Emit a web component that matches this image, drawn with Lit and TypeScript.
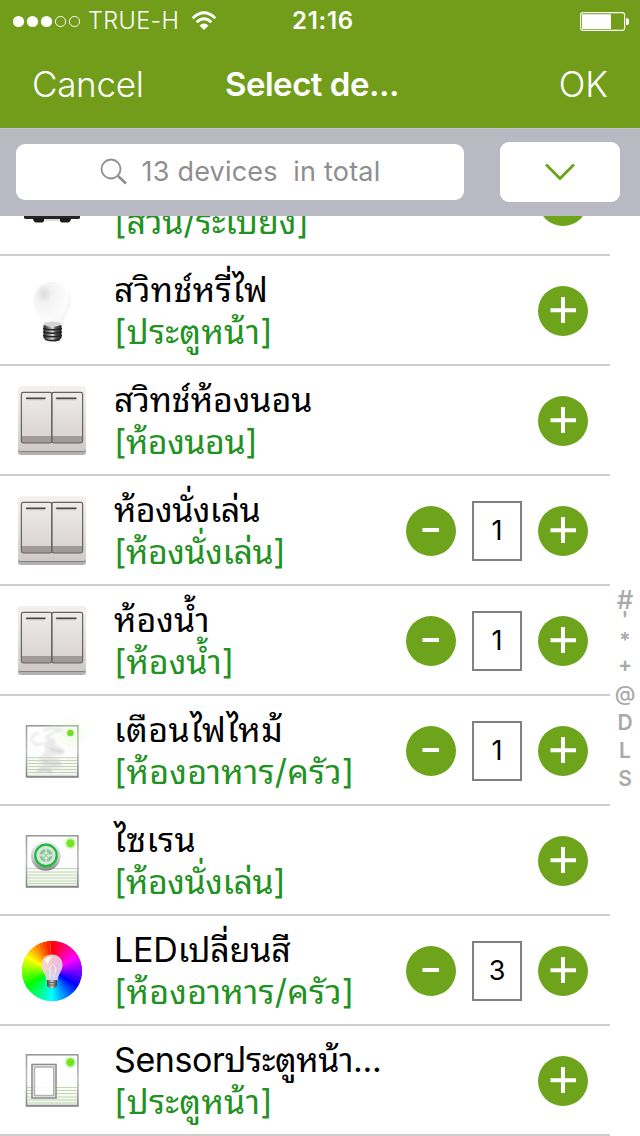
import { LitElement, html, svg, css, nothing } from "lit";
import { customElement, property } from "lit/decorators.js";
import { styleMap } from "lit/directives/style-map.js";

type IconKind = "box" | "bulb" | "switch" | "smoke" | "siren" | "led" | "door";

interface Device {
  icon: IconKind;
  name: string;
  room: string;
  count?: number;
  nameSpacing?: number;
  roomSpacing?: number;
}

const DEVICES: Device[] = [
  { icon: "box", name: "", room: "[สวน/ระเบียง]" },
  { icon: "bulb", name: "สวิทช์หรี่ไฟ", room: "[ประตูหน้า]", nameSpacing: 0.45, roomSpacing: 0.3 },
  { icon: "switch", name: "สวิทช์ห้องนอน", room: "[ห้องนอน]", nameSpacing: -0.1, roomSpacing: -0.5 },
  { icon: "switch", name: "ห้องนั่งเล่น", room: "[ห้องนั่งเล่น]", count: 1, nameSpacing: -0.6, roomSpacing: -0.45 },
  { icon: "switch", name: "ห้องน้ำ", room: "[ห้องน้ำ]", count: 1 },
  { icon: "smoke", name: "เตือนไฟไหม้", room: "[ห้องอาหาร/ครัว]", count: 1, nameSpacing: 0.5, roomSpacing: 0.2 },
  { icon: "siren", name: "ไซเรน", room: "[ห้องนั่งเล่น]", nameSpacing: 0.5, roomSpacing: -0.45 },
  { icon: "led", name: "LEDเปลี่ยนสี", room: "[ห้องอาหาร/ครัว]", count: 3, nameSpacing: -0.15, roomSpacing: 0.2 },
  { icon: "door", name: "Sensorประตูหน้า...", room: "[ประตูหน้า]", nameSpacing: -0.4, roomSpacing: 0.3 },
];

const INDEX = ["#", "'", "*", "+", "@", "D", "L", "S"];

const SECTORS = Array.from({ length: 48 }, (_, i) => {
  const step = (Math.PI * 2) / 48;
  const a = (i - 0.5) * step;
  const b = (i + (i < 47 ? 1.3 : 0.5)) * step;
  const at = (t: number) => `${52 + 30 * Math.sin(t)} ${55 - 30 * Math.cos(t)}`;
  return { d: `M52 55L${at(a)}A30 30 0 0 1 ${at(b)}Z`, fill: `hsl(${(360 - i * 7.5) % 360} 100% 50%)` };
});

/** Housing shared by the wireless sensors: framed plate, vent lines and status light. */
const plate = (lines: number[], glow: boolean) => svg`
  <defs>
    <linearGradient id="frame" x1="0" y1="0" x2="0" y2="1">
      <stop offset="0" stop-color="#9b9b9b"/><stop offset=".5" stop-color="#bdbdbd"/><stop offset="1" stop-color="#808080"/>
    </linearGradient>
    <linearGradient id="face" x1="0" y1="0" x2="0" y2="1">
      <stop offset="0" stop-color="#fff"/><stop offset=".6" stop-color="#fdfdfd"/><stop offset="1" stop-color="#f1f3ef"/>
    </linearGradient>
    <radialGradient id="light">
      <stop offset="0" stop-color="#6be41c"/><stop offset=".5" stop-color="#74e62b"/><stop offset=".68" stop-color="#b6f28c" stop-opacity=".6"/><stop offset="1" stop-color="#dfffd0" stop-opacity="0"/>
    </radialGradient>
    <radialGradient id="haze">
      <stop offset="0" stop-color="#cdf5b4" stop-opacity=".45"/><stop offset="1" stop-color="#e8ffe0" stop-opacity="0"/>
    </radialGradient>
  </defs>
  <rect x="26.500" y="29.800" width="51.400" height="51" fill="url(#face)" stroke="url(#frame)" stroke-width="1.600"/>
  <path d="M26 80.600H78.600" stroke="#8a8a8a" stroke-width="1.600"/>
  ${lines.map((y) => svg`<path d=${`M27.5 ${y}H77`} stroke="#bfd8ad" stroke-width="1"/>`)}
  ${glow
    ? svg`<circle cx="70.400" cy="37.300" r="7" fill="url(#light)"/>`
    : svg`<circle cx="70.400" cy="37" r="20" fill="url(#haze)"/><circle cx="70.400" cy="37" r="3.300" fill="#72e01f"/>`}
`;

const ICONS: Record<IconKind, () => unknown> = {
  box: () => svg`
    <path d="M24 66H80V71.500Q80 73 78 73H26Q24 73 24 71.500Z" fill="#262424"/>
    <path d="M33 72H44V74.500Q44 76.400 42 76.400H36Q33 76 33 72ZM60 72H71Q71 76 68 76.400H62Q60 76.400 60 74.500Z" fill="#1c1a1a"/>
    <path d="M44 74H60" stroke="#bbb" stroke-width="1"/>`,
  bulb: () => svg`
    <defs>
      <radialGradient id="glass" cx=".28" cy=".26" r=".75">
        <stop offset="0" stop-color="#dcdcdc"/><stop offset=".28" stop-color="#f3f3f3"/><stop offset=".8" stop-color="#fcfcfc"/><stop offset="1" stop-color="#f4f4f4"/>
      </radialGradient>
      <linearGradient id="cap">
        <stop offset="0" stop-color="#222"/><stop offset=".25" stop-color="#777"/><stop offset=".5" stop-color="#ddd"/><stop offset=".7" stop-color="#555"/><stop offset="1" stop-color="#1d1d1d"/>
      </linearGradient>
    </defs>
    <path d="M52.500 26C62 26 71.500 33.500 71.500 44C71.500 53 64.500 57.500 63.500 69Q53 73 42 69C41 58 33.500 54 33.500 44C33.500 34 42 26 52.500 26Z" fill="url(#glass)"/>
    <path d="M44 67Q52 64 61 67V70H44Z" fill="#d4d4d4"/>
    <path d="M43.500 69Q52.500 72 61.500 69V82Q58 86 52.500 86Q47 86 43.500 82Z" fill="url(#cap)"/>
    <path d="M43 72.500Q52 75 62 72.500M43 76Q52 78.500 62 76M43 79.500Q52 82 62 79.500M45 83.500Q52 85.500 60 83.500" fill="none" stroke="#242424" stroke-width="1.300"/>`,
  switch: () => svg`
    <defs>
      <linearGradient id="base" x1="0" y1="0" x2="0" y2="1">
        <stop offset="0" stop-color="#f4f1ee"/><stop offset=".5" stop-color="#e5e1de"/><stop offset="1" stop-color="#cfcac7"/>
      </linearGradient>
      <linearGradient id="key" x1="0" y1="0" x2="0" y2="1">
        <stop offset="0" stop-color="#eeebe8"/><stop offset="1" stop-color="#d7d2cf"/>
      </linearGradient>
    </defs>
    <rect x="18" y="24" width="68" height="65" rx="3" fill="#b3b1b0"/>
    <rect x="18.500" y="23" width="67" height="63" rx="2.500" fill="#858381"/>
    <rect x="18" y="20" width="68" height="65" rx="2.500" fill="url(#base)"/>
    <rect x="21.400" y="26.400" width="30.400" height="50.400" rx="1.800" fill="url(#key)"/>
    <rect x="51.800" y="26.400" width="30.800" height="50.400" rx="1.800" fill="url(#key)"/>
    <path d="M22 70H82V76H22Z" fill="#a09b98"/>
    <rect x="21.400" y="26.400" width="30.400" height="50.400" rx="1.800" fill="none" stroke="#646461" stroke-width="1.200"/>
    <rect x="51.800" y="26.400" width="30.800" height="50.400" rx="1.800" fill="none" stroke="#646461" stroke-width="1.200"/>
    <path d="M26.500 32.300H45M56.500 32.300H76" stroke="#4b4a49" stroke-width="1.500" stroke-linecap="round"/>
    <path d="M26.500 33.700H45M56.500 33.700H76" stroke="#aaa6a4" stroke-width=".8"/>`,
  smoke: () => svg`
    ${plate([61.700, 64.500, 67.500, 70.500, 73.500, 76.500], false)}
    <defs><filter id="soft"><feGaussianBlur stdDeviation="1"/></filter></defs>
    <g filter="url(#soft)" opacity=".75">
      <path d="M39 37Q31 38 32 45Q35 51 43 47M43 35Q52 29 61 34Q52 36 45 42" fill="none" stroke="#e4e4e4" stroke-width="2.500"/>
      <path d="M49 41Q57 42 56 49Q65 52 64 58Q56 61 50 59Q61 63 62 69Q57 75 51 72Q55 78 47 77L36 77Q38 71 43 70Q36 67 40 61L46 55Q41 50 49 41Z" fill="#d5d2d5" opacity=".6"/>
      <path d="M50 52Q55 56 64 55M43 65Q51 69 60 67M38 75Q44 72 52 76" fill="none" stroke="#bdb8bd" stroke-width="2" opacity=".7"/>
    </g>`,
  siren: () => svg`
    ${plate([62.600, 66, 69, 72, 75, 77.500], true)}
    <defs>
      <linearGradient id="rim" x1="0" y1="0" x2="0" y2="1"><stop offset="0" stop-color="#efefef"/><stop offset=".6" stop-color="#c9c9c9"/><stop offset="1" stop-color="#858585"/></linearGradient>
    </defs>
    <circle cx="45.800" cy="50" r="14.800" fill="url(#rim)"/>
    <circle cx="46" cy="49.400" r="10.700" fill="#dce4dd" stroke="#15bd3a" stroke-width="2.200"/>
    <circle cx="46" cy="49.400" r="5" fill="none" stroke="#83c995" stroke-width="3"/>
    <path d="M46 43V56M39.500 49.400H52.500" stroke="#dce4dd" stroke-width="1.600"/>
    <path d="M43.500 47L48.500 52M48.500 47L43.500 52" stroke="#80c592" stroke-width="1"/>`,
  led: () => svg`
    ${SECTORS.map((s) => svg`<path d=${s.d} fill=${s.fill}/>`)}
    <defs>
      <linearGradient id="lamp" x1="0" y1="0" x2="1" y2="1"><stop offset="0" stop-color="#f6ded8"/><stop offset=".5" stop-color="#eccde0"/><stop offset="1" stop-color="#d9dff2"/></linearGradient>
      <linearGradient id="screw"><stop offset="0" stop-color="#444"/><stop offset=".5" stop-color="#ccc"/><stop offset="1" stop-color="#333"/></linearGradient>
    </defs>
    <path d="M52 38.500C58.500 38.500 62.500 43 62.500 49C62.500 55 58 58 57.500 65H46.500C46 58 41.500 55 41.500 49C41.500 43 45.500 38.500 52 38.500Z" fill="url(#lamp)" opacity=".93"/>
    <path d="M45 44Q48 40 53 41Q49 43 48 49Z" fill="#fff" opacity=".8"/>
    <path d="M50 61V51L53 48L56 52L54 61" fill="none" stroke="#f4eff5" stroke-width="1"/>
    <path d="M47 64H57V70L54.500 72H49.500L47 70Z" fill="url(#screw)"/>
    <path d="M47 66.500H57M47 69H57" stroke="#555" stroke-width=".7"/>`,
  door: () => svg`
    <g transform="translate(0 -1)">
      ${plate([62.500, 65.500, 68.500, 72, 75, 78], true)}
      <rect x="32" y="39.500" width="24" height="33.500" fill="#fff" fill-opacity=".75" stroke="#8d8d8d" stroke-width="1.600"/>
      <rect x="34.400" y="42" width="19.400" height="28.600" fill="#fff" fill-opacity=".7" stroke="#b2b2b2" stroke-width="1.600"/>
    </g>`,
};

@customElement("device-row")
class DeviceRow extends LitElement {
  @property({ attribute: false }) device!: Device;

  static styles = css`
    :host {
      display: flex;
      box-sizing: border-box;
      height: 110px;
      flex: none;
      align-items: center;
      padding-right: 22px;
      border-bottom: 2px solid #cecece;
    }
    .icon { width: 104px; height: 108px; flex: none; display: block; }
    .text { flex: 1; min-width: 0; padding: 2px 0 0 10px; white-space: nowrap; font-size: 34px; }
    .name, .room { height: 42px; line-height: 42px; }
    .name { color: #000; }
    .room { color: #1f9222; }
    .controls { display: flex; align-items: center; gap: 16px; padding-top: 2px; }
    .round { display: block; width: 50px; height: 50px; }
    .count {
      box-sizing: border-box;
      width: 50px;
      height: 60px;
      border: 2px solid #808080;
      font-size: 27px;
      line-height: 55px;
      text-align: center;
      color: #000;
    }
  `;

  private button(minus: boolean) {
    return html`<svg class="round" viewBox="0 0 50 50">
      <circle cx="25" cy="25" r="25" fill="#6ea31c"></circle>
      ${minus
        ? svg`<path d="M16.500 24H33" stroke="#fff" stroke-width="4"/>`
        : svg`<path d="M12.500 24.300H38M25 11V37" stroke="#fff" stroke-width="4"/>`}
    </svg>`;
  }

  render() {
    const d = this.device;
    return html`
      <svg class="icon" viewBox="0 0 104 108">${ICONS[d.icon]()}</svg>
      <div class="text">
        <div class="name"><span style=${styleMap({ letterSpacing: `${d.nameSpacing ?? 0}px` })}>${d.name}</span></div>
        <div class="room"><span style=${styleMap({ letterSpacing: `${d.roomSpacing ?? 0}px` })}>${d.room}</span></div>
      </div>
      <div class="controls">
        ${d.count ? html`${this.button(true)}<div class="count">${d.count}</div>` : nothing}
        ${this.button(false)}
      </div>
    `;
  }
}

@customElement("app-root")
class AppRoot extends LitElement {
  static styles = css`
    :host {
      display: flex;
      flex-direction: column;
      width: 640px;
      height: 1136px;
      overflow: hidden;
      background: #fff;
      font-family: Inter, "Noto Sans Thai Looped", Thonburi, Loma, Waree, Garuda, "Noto Sans Thai", "Noto Sans", sans-serif;
    }
    .status, .nav { display: grid; background: #719d1b; color: #fff; align-items: center; flex: none; }
    .status { height: 40px; grid-template-columns: 1fr auto 1fr; font-size: 23px; line-height: 40px; }
    .carrier { display: flex; align-items: center; padding-left: 12px; }
    .dots { width: 69px; height: 14px; margin-right: 7px; }
    .operator { font-weight: 300; font-size: 23.5px; letter-spacing: 0.35px; padding-top: 1px; }
    .wifi { width: 26px; height: 20px; margin-left: 12px; }
    .time { font-weight: 600; font-size: 24px; letter-spacing: 0.7px; padding-left: 6px; padding-top: 1px; }
    .battery { justify-self: end; width: 50px; height: 20px; margin-right: 10px; }
    .nav { height: 88px; grid-template-columns: 1fr auto 1fr; font-size: 35px; }
    .cancel { padding-left: 32px; font-weight: 300; letter-spacing: -0.3px; }
    .title { font-weight: 600; font-size: 33px; letter-spacing: -0.5px; padding-right: 16px; }
    .ok { justify-self: end; padding-right: 32px; font-weight: 300; }
    .tools {
      height: 88px;
      box-sizing: border-box;
      flex: none;
      display: flex;
      align-items: center;
      justify-content: space-between;
      padding: 0 20px 0 16px;
      background: #b9b9c3;
      box-shadow: inset 0 1px #c3c3c6;
    }
    .search {
      width: 448px;
      height: 56px;
      border-radius: 9px;
      background: #fff;
      display: flex;
      align-items: center;
      justify-content: center;
      gap: 14px;
      color: #8e8e90;
      font-size: 27px;
      letter-spacing: 0.2px;
      white-space: pre;
    }
    .hint { padding-bottom: 2px; }
    .lens { width: 28px; height: 28px; }
    .more { width: 120px; height: 60px; border-radius: 9px; background: #fff; display: grid; place-items: center; }
    .chevron { width: 32px; height: 20px; }
    .body { flex: 1; min-height: 0; display: flex; overflow: hidden; }
    .list { width: 610px; margin-top: -70px; display: flex; flex-direction: column; }
    .index {
      width: 30px;
      padding-top: 373px;
      display: flex;
      flex-direction: column;
      align-items: center;
      font-size: 21px;
      font-weight: 600;
      color: #a9a9a9;
    }
    .mark { height: 28px; line-height: 28px; }
    .mark:nth-child(1) { font-size: 26px; font-weight: 500; height: 22px; line-height: 22px; }
    .mark:nth-child(2) { height: 17px; line-height: 17px; }
    .mark:nth-child(3) { height: 24px; line-height: 25px; }
    .mark:nth-child(4) { line-height: 26px; }
    .mark:nth-child(5) { height: 29px; font-weight: 500; }
  `;

  render() {
    return html`
      <div class="status">
        <div class="carrier">
          <svg class="dots" viewBox="0 0 69 14">
            <g fill="#fff"><circle cx="6.500" cy="7.500" r="5.600"/><circle cx="20.500" cy="7.500" r="5.600"/><circle cx="34.500" cy="7.500" r="5.600"/></g>
            <g fill="none" stroke="#fff"><circle cx="48.500" cy="7.500" r="5.100"/><circle cx="62.500" cy="7.500" r="5.100"/></g>
          </svg>
          <span class="operator">TRUE-H</span>
          <svg class="wifi" viewBox="0 0 26 20" fill="none" stroke="#fff" stroke-width="2.800">
            <path d="M1.700 7.200Q13 -3.600 24.300 7.200"/>
            <path d="M5.600 11.300Q13 4.300 20.400 11.300"/>
            <path d="M13 19L8.500 14.400Q13 10.800 17.500 14.400Z" fill="#fff" stroke="none"/>
          </svg>
        </div>
        <div class="time">21:16</div>
        <svg class="battery" viewBox="0 0 50 20">
          <rect x=".6" y="1.600" width="44" height="17.800" rx="2.500" fill="none" stroke="#fff" stroke-width="1.100"/>
          <path d="M2 3.300H31V18H2ZM46 7.200H47Q49 7.200 49 9.200V12Q49 14 47 14H46Z" fill="#fff"/>
        </svg>
      </div>
      <div class="nav">
        <span class="cancel">Cancel</span>
        <span class="title">Select de...</span>
        <span class="ok">OK</span>
      </div>
      <div class="tools">
        <div class="search"><svg class="lens" viewBox="0 0 28 28" fill="none" stroke="#8e8e90">
            <circle cx="11" cy="11" r="9.500" stroke-width="1.800"/>
            <path d="M18 18L26 25.500" stroke-width="2.600"/>
          </svg><span class="hint">13 devices  in total</span></div>
        <div class="more">
          <svg class="chevron" viewBox="0 0 32 20"><path d="M2 2.500L16 16.500L30 2.500" fill="none" stroke="#6ea31c" stroke-width="3"/></svg>
        </div>
      </div>
      <div class="body">
        <div class="list">${DEVICES.map((d) => html`<device-row .device=${d}></device-row>`)}</div>
        <div class="index">${INDEX.map((c) => html`<span class="mark">${c}</span>`)}</div>
      </div>
    `;
  }
}
